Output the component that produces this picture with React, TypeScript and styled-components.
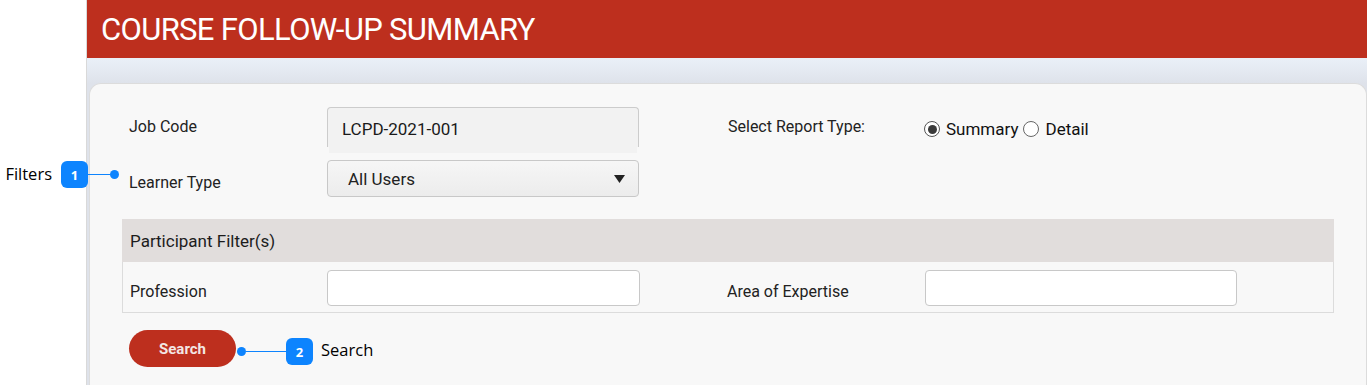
import styled, { createGlobalStyle } from "styled-components";

const GlobalStyle = createGlobalStyle`
  html, body {
    margin: 0;
    padding: 0;
    background: #ffffff;
    font-family: Roboto, "Liberation Sans", sans-serif;
    color: #222;
  }
  * { box-sizing: border-box; }
`

const Page = styled.div`
  position: relative;
  display: flex;
  width: 1367px;
  height: 385px;
  overflow: hidden;
`

const Sidebar = styled.div`
  width: 87px;
  flex: none;
  background: #ffffff;
  border-right: 1px solid #d9d9d9;
`

const Main = styled.div`
  flex: 1;
  display: flex;
  flex-direction: column;
  background: linear-gradient(#e9eff7 58px, #e9eff7 60px, #dee2ea 84px, #dee2ea);
`

const Header = styled.div`
  height: 58px;
  background: #bd2f1e;
  display: flex;
  align-items: center;
  padding-left: 14px;
`

const Title = styled.h1`
  margin: 0;
  font-weight: 400;
  font-size: 31px;
  color: #ffffff;
  letter-spacing: -0.65px;
  padding-top: 1px;
`

const Card = styled.div`
  margin: 25px 0 0 2px;
  flex: 1;
  background: #f8f8f8;
  border: 1px solid #dcdcdc;
  border-bottom: none;
  border-radius: 12px 12px 0 0;
  padding: 23px 32px 0 32px;
`

const TopGrid = styled.div`
  display: grid;
  grid-template-columns: 198px 312px 89px 196px 1fr;
  grid-template-rows: 46px 37px;
  row-gap: 7px;
  padding-left: 7px;
  align-items: start;
`

const Label = styled.div<{ $shift?: number }>`
  font-size: 16px;
  color: #222;
  padding-top: ${p => p.$shift ?? 0}px;
  line-height: 40px;
`

const ReadonlyInput = styled.input`
  width: 312px;
  height: 40px;
  border: 1px solid #cccccc;
  border-bottom: none;
  border-radius: 4px 4px 0 0;
  background: #f2f2f2;
  box-shadow: 0 8px 0 -2px #f2f2f2;
  font-family: inherit;
  font-size: 17px;
  color: #1a1a1a;
  padding: 2px 0 0 14px;
  outline: none;
`

const SelectBox = styled.div`
  width: 312px;
  height: 37px;
  border: 1px solid #c8c8c8;
  border-radius: 4px;
  background: linear-gradient(#f6f6f6, #ececec);
  display: flex;
  align-items: center;
  justify-content: space-between;
  padding: 0 13px 0 20px;
  font-size: 17px;
  color: #222;
`

const RadioGroup = styled.div`
  display: flex;
  align-items: center;
  height: 44px;
  font-size: 17px;
  color: #111;
`

const RadioOption = styled.label`
  display: flex;
  align-items: center;
  gap: 6px;
  margin-right: 5px;
`

const RadioDot = styled.span<{ $checked?: boolean }>`
  width: 16px;
  height: 16px;
  border-radius: 50%;
  border: 1.5px solid ${p => (p.$checked ? "#555" : "#666")};
  background: #fff;
  display: inline-flex;
  align-items: center;
  justify-content: center;
  &::after {
    content: "";
    width: 9px;
    height: 9px;
    border-radius: 50%;
    background: ${p => (p.$checked ? "#3a3a3a" : "transparent")};
  }
`

const FilterTable = styled.div`
  margin-top: 22px;
`

const FilterHead = styled.div`
  height: 43px;
  background: #e1dddc;
  display: flex;
  align-items: center;
  padding-left: 8px;
  font-size: 17px;
  color: #1c1c1c;
`

const FilterRow = styled.div`
  height: 51px;
  border: 1px solid #dcdcdc;
  border-top: none;
  display: grid;
  grid-template-columns: 197px 313px 87px 198px 312px;
  align-items: center;
  padding-left: 7px;
`

const RowLabel = styled.div`
  font-size: 16px;
  color: #222;
  padding-top: 8px;
`

const TextBox = styled.input`
  height: 36px;
  width: 100%;
  border: 1px solid #c8c8c8;
  border-radius: 4px;
  background: #ffffff;
  outline: none;
  margin-top: 1px;
`

const SearchButton = styled.button`
  margin: 17px 0 0 7px;
  width: 107px;
  height: 37px;
  border: none;
  border-radius: 19px;
  background: #bd2f1e;
  color: #f3e6e4;
  font-family: inherit;
  font-weight: 700;
  font-size: 15px;
  cursor: pointer;
`

const Callout = styled.div<{ $top: number; $left: number }>`
  position: absolute;
  top: ${p => p.$top}px;
  left: ${p => p.$left}px;
  display: flex;
  align-items: center;
`

const CalloutText = styled.span<{ $side: "left" | "right" }>`
  font-family: "Open Sans", "DejaVu Sans", sans-serif;
  font-size: 16.5px;
  color: #000;
  ${p => (p.$side === "left"
    ? "width: 52px; text-align: right; margin-right: 9px; margin-top: -2px;"
    : "margin-left: 8px; margin-top: -4px;")}
`

const Badge = styled.div`
  width: 27px;
  height: 27px;
  flex: none;
  border-radius: 6px;
  background: #0d84fe;
  color: #fff;
  font-family: "Open Sans", sans-serif;
  font-weight: 700;
  font-size: 13px;
  display: flex;
  align-items: center;
  justify-content: center;
`

const Leader = styled.div<{ $w: number }>`
  width: ${p => p.$w}px;
  height: 1.5px;
  background: #0d84fe;
`

const Dot = styled.div`
  width: 9px;
  height: 9px;
  border-radius: 50%;
  background: #0d84fe;
`

export default function App() {
  return (
    <>
      <GlobalStyle />
      <Page>
        <Sidebar />
        <Main>
          <Header>
            <Title>COURSE FOLLOW-UP SUMMARY</Title>
          </Header>
          <Card>
            <TopGrid>
              <Label>Job Code</Label>
              <ReadonlyInput readOnly value="LCPD-2021-001" />
              <div />
              <Label>Select Report Type:</Label>
              <RadioGroup>
                <RadioOption><RadioDot $checked />Summary</RadioOption>
                <RadioOption><RadioDot />Detail</RadioOption>
              </RadioGroup>
              <Label $shift={3}>Learner Type</Label>
              <SelectBox>
                <span>All Users</span>
                <svg width="11" height="8" viewBox="0 0 11 8">
                  <path d="M0 0 H11 L5.5 8 Z" fill="#222" />
                </svg>
              </SelectBox>
            </TopGrid>
            <FilterTable>
              <FilterHead>Participant Filter(s)</FilterHead>
              <FilterRow>
                <RowLabel>Profession</RowLabel>
                <TextBox />
                <div />
                <RowLabel>Area of Expertise</RowLabel>
                <TextBox />
              </FilterRow>
            </FilterTable>
            <SearchButton>Search</SearchButton>
          </Card>
        </Main>

        <Callout $top={161} $left={0}>
          <CalloutText $side="left">Filters</CalloutText>
          <Badge>1</Badge>
          <Leader $w={22} />
          <Dot />
        </Callout>
        <Callout $top={338} $left={237}>
          <Dot />
          <Leader $w={40} />
          <Badge>2</Badge>
          <CalloutText $side="right">Search</CalloutText>
        </Callout>
      </Page>
    </>
  );
}
